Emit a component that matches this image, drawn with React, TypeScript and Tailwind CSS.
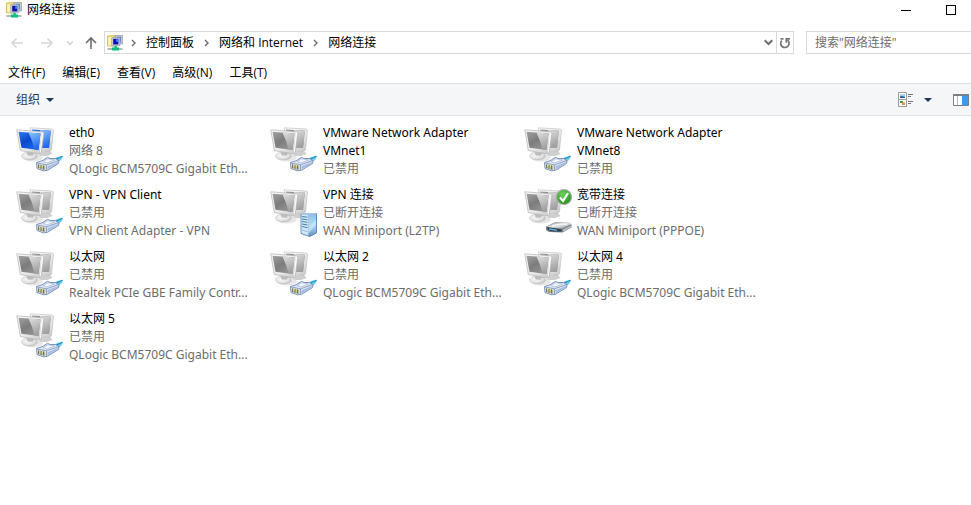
import React from "react";

type Badge = "cable" | "server" | "modem";

type Connection = {
  name: string;
  lines: string[];
  badge: Badge;
  active?: boolean;
  isDefault?: boolean;
};

const connections: Connection[] = [
  { name: "eth0", lines: ["网络 8", "QLogic BCM5709C Gigabit Eth..."], badge: "cable", active: true },
  { name: "VMware Network Adapter VMnet1", lines: ["已禁用"], badge: "cable" },
  { name: "VMware Network Adapter VMnet8", lines: ["已禁用"], badge: "cable" },
  { name: "VPN - VPN Client", lines: ["已禁用", "VPN Client Adapter - VPN"], badge: "cable" },
  { name: "VPN 连接", lines: ["已断开连接", "WAN Miniport (L2TP)"], badge: "server" },
  { name: "宽带连接", lines: ["已断开连接", "WAN Miniport (PPPOE)"], badge: "modem", isDefault: true },
  { name: "以太网", lines: ["已禁用", "Realtek PCIe GBE Family Contr..."], badge: "cable" },
  { name: "以太网 2", lines: ["已禁用", "QLogic BCM5709C Gigabit Eth..."], badge: "cable" },
  { name: "以太网 4", lines: ["已禁用", "QLogic BCM5709C Gigabit Eth..."], badge: "cable" },
  { name: "以太网 5", lines: ["已禁用", "QLogic BCM5709C Gigabit Eth..."], badge: "cable" },
];

const menus = ["文件(F)", "编辑(E)", "查看(V)", "高级(N)", "工具(T)"];
const crumbs = ["控制面板", "网络和 Internet", "网络连接"];

function Gradients() {
  return (
    <svg width="0" height="0" className="absolute" aria-hidden="true">
      <defs>
        <linearGradient id="blueScreen" x1="0" y1="0" x2="0.7" y2="1">
          <stop offset="0" stopColor="#2f7df0" />
          <stop offset="0.5" stopColor="#0b46cc" />
          <stop offset="1" stopColor="#1c6cf0" />
        </linearGradient>
        <linearGradient id="blueShine" x1="0" y1="0" x2="0.3" y2="1">
          <stop offset="0" stopColor="#8cc6ff" />
          <stop offset="1" stopColor="#1f68ee" />
        </linearGradient>
        <linearGradient id="greyScreen" x1="0" y1="0" x2="0.7" y2="1">
          <stop offset="0" stopColor="#a2a2a2" />
          <stop offset="0.5" stopColor="#7c7c7c" />
          <stop offset="1" stopColor="#969696" />
        </linearGradient>
        <linearGradient id="greyShine" x1="0" y1="0" x2="0.3" y2="1">
          <stop offset="0" stopColor="#dedede" />
          <stop offset="1" stopColor="#a0a0a0" />
        </linearGradient>
        <linearGradient id="bezel" x1="0" y1="0" x2="1" y2="1">
          <stop offset="0" stopColor="#fafafa" />
          <stop offset="0.6" stopColor="#e8e8e8" />
          <stop offset="1" stopColor="#c2c2c2" />
        </linearGradient>
        <radialGradient id="foot" cx="0.4" cy="0.4" r="0.7">
          <stop offset="0" stopColor="#fafafa" />
          <stop offset="0.6" stopColor="#e2e2e2" />
          <stop offset="1" stopColor="#b2b2b2" />
        </radialGradient>
        <linearGradient id="serverSide" x1="0" y1="0" x2="0" y2="1">
          <stop offset="0" stopColor="#8dbbe0" />
          <stop offset="0.5" stopColor="#b8dbf2" />
          <stop offset="1" stopColor="#5b8fc0" />
        </linearGradient>
        <radialGradient id="check" cx="0.4" cy="0.3" r="0.8">
          <stop offset="0" stopColor="#6fd05c" />
          <stop offset="1" stopColor="#1c8c14" />
        </radialGradient>
        <linearGradient id="modemTop" x1="0" y1="0" x2="1" y2="1">
          <stop offset="0" stopColor="#8e979c" />
          <stop offset="0.5" stopColor="#e4e8ea" />
          <stop offset="1" stopColor="#7e878c" />
        </linearGradient>
      </defs>
    </svg>
  );
}

function CableBadge() {
  return (
    <g>
      <path d="M37 36 L41 33 L47 31.800 L45.500 35.500 L42 38.500Z" fill="#6fcdea" />
      <path d="M39.500 35.500 L46.500 32.300" stroke="#1b8fc6" strokeWidth="1.200" />
      <path d="M20.500 38.500 L26 36.800 L31.500 33.300 L34 34.500 L39.500 34.500 L43 36.800 L42.500 39.500 L31.500 46.300 L27.500 46.800 L21 44.500Z" fill="#dbe5f4" stroke="#6f88b2" strokeWidth="0.900" strokeLinejoin="round" />
      <path d="M21 39 L30.500 40.800 L42 36.800 M30.500 40.800 L30.500 46" fill="none" stroke="#7d93b8" strokeWidth="0.800" />
      <path d="M27 37.500 L32 34.800 L38.500 36 L31 38.800Z" fill="#f4f8fd" stroke="#8fa3c6" strokeWidth="0.500" />
      <path d="M31.500 42.300 L42 38 L42 39.500 L31.500 45.300Z" fill="#a6bee2" />
      <path d="M22.200 40.200v3.800l7 2.300v-4.600z" fill="#b9b998" />
      <path d="M22.500 40.500v3.500M25 41v3.800M27.500 41.500v4" stroke="#6a6c52" strokeWidth="0.900" />
      <path d="M23.800 40.700v2.300M26.300 41.200v2.300" stroke="#f0e46a" strokeWidth="0.900" />
    </g>
  );
}

function ServerBadge() {
  return (
    <g>
      <path d="M31 28 L35 27 L46.500 27.500 L46.500 47 L40 50.500 L31 47.500Z" fill="#6c9fce" />
      <path d="M31 28 L38.500 29 L38.500 50 L31 47.500Z" fill="#d3e8f6" />
      <path d="M38.500 29 L46.500 27.500 L46.500 47 L39.500 50.500 L38.500 50Z" fill="url(#serverSide)" />
      <path d="M31 28 L35 27 L46.500 27.500 L38.500 29Z" fill="#a9cce8" />
      <path d="M32 30.500l5.500 .7M32 33l5.500 .8M32 35.500l5.500 .9M32 38l5.500 1M32 40.500l5.500 1.200" stroke="#427fae" strokeWidth="1" />
      <path d="M32 44 L37.500 45.700" stroke="#93bdd8" strokeWidth="1" />
      <path d="M38.500 42 L46.500 33 L46.500 37 L38.500 48Z" fill="#dceefa" opacity="0.6" />
      <path d="M31 28 L31 47.500 L39.500 50.500 L46.500 47 L46.500 27.500" fill="none" stroke="#4a7fb0" strokeWidth="0.800" />
    </g>
  );
}

function ModemBadge() {
  return (
    <g>
      <path d="M22 40.500 L31 36.300 L45 36.800 L47.500 38.500 L47.500 41.500 L38.500 46.500 L25 46 L22 44Z" fill="#7a8186" />
      <path d="M22.500 40.500 L31.500 36.300 L45 36.800 L47 38.500 L38 42.500 L27 41.500Z" fill="url(#modemTop)" />
      <path d="M28 40 Q33 37.500 43 38.300" fill="none" stroke="#fff" strokeWidth="1" />
      <path d="M23 41.200 Q30 42 37.500 43.500 L37.500 45.500 Q28 46 24 44Z" fill="#2b3d48" />
      <path d="M25 42.800 L33 44.300" stroke="#62bfe8" strokeWidth="1.300" />
      <path d="M39 43.500 L47 39.800 L47 41.300 L39 45.500Z" fill="#bcc2c5" />
    </g>
  );
}

function ConnectionIcon({ badge, active, isDefault }: Pick<Connection, "badge" | "active" | "isDefault">) {
  const screen = active ? "url(#blueScreen)" : "url(#greyScreen)";
  const shine = active ? "url(#blueShine)" : "url(#greyShine)";
  return (
    <svg width="48" height="52" viewBox="0 0 48 52" className="shrink-0" aria-hidden="true">
      <path d="M24 27 L34 27 L36.500 30 L31 32 L23 32Z" fill="#cfcfcf" />
      <ellipse cx="17" cy="33.500" rx="10" ry="4" fill="#dddddd" opacity="0.7" />
      <path d="M14 3.800 L36.500 5 L37.500 6.300 L35.500 26 L33 27.500 L20 25Z" fill="url(#bezel)" stroke="#bcbcbc" strokeWidth="0.600" />
      <path d="M16 5.500 L34.800 6.800 L33 24 L20 24Z" fill={screen} />
      <path d="M24 6 L34.800 6.800 L33 24 L26 24Z" fill={shine} />
      <ellipse cx="13.500" cy="32" rx="8" ry="4" fill="url(#foot)" stroke="#bebebe" strokeWidth="0.500" />
      <path d="M10.500 28 L18.500 28.700 L16.500 31.800 L11.500 31.500Z" fill="#bdbdbd" />
      <path d="M0.800 5.800 L26.500 7.800 L28 9.300 L25.300 28.300 L23 29.800 L4.300 26.500Z" fill="url(#bezel)" stroke="#b2b2b2" strokeWidth="0.700" />
      <path d="M2.500 7.800 L24.500 9.500 L22.500 26 L5.500 23.800Z" fill={screen} />
      <path d="M12.500 8.600 L24.500 9.500 L22.500 26 L18.500 25.500 Q16.500 17 12.500 8.600Z" fill={shine} />
      <path d="M26.500 8.500 L24.300 28.500" stroke="#fff" strokeWidth="0.900" />
      {badge === "cable" && <CableBadge />}
      {badge === "server" && <ServerBadge />}
      {badge === "modem" && <ModemBadge />}
      {isDefault && (
        <g>
          <circle cx="40" cy="11" r="7.500" fill="url(#check)" stroke="#a9aaa9" strokeWidth="1.200" />
          <path d="M36 11.500 L39 15 L44 7" fill="none" stroke="#fff" strokeWidth="2.200" />
        </g>
      )}
    </svg>
  );
}

function NetworkFolderIcon() {
  return (
    <svg width="16" height="16" viewBox="0 0 16 16" className="shrink-0" aria-hidden="true">
      <path d="M.5 1 L8 .500 L9 1 L9 11 L.5 11Z" fill="#f0d877" stroke="#cfae48" strokeWidth="0.700" />
      <path d="M1.200 2h3.300v8.500H1.200z" fill="#fdf3b4" />
      <path d="M8 .500 L15.500 .500 L15.500 9 L8 9Z" fill="#c3c9d3" stroke="#9299a6" strokeWidth="0.700" />
      <path d="M10 1.800h4v5.500h-4z" fill="#5d83dc" />
      <path d="M4.800 2.800h8v8h-8z" fill="#d4dbe8" stroke="#8d97aa" strokeWidth="0.700" />
      <path d="M6.200 3.800h5.200v5.700H6.200z" fill="#1010a8" />
      <path d="M9.200 4.200h2v2.600h-2z" fill="#4b8cf4" />
      <path d="M7.500 11h2.300v1.500H12V15.500H5v-3h2.500z" fill="#10bd80" />
      <path d="M.5 14H5M12 14h3.500" stroke="#8fa8a4" strokeWidth="1.500" />
    </svg>
  );
}

function Arrow({ d, color }: { d: string; color: string }) {
  return (
    <svg width="14" height="14" viewBox="0 0 14 14" fill="none" stroke={color} strokeWidth="1.600" aria-hidden="true">
      <path d={d} />
    </svg>
  );
}

function Separator() {
  return (
    <svg width="6" height="8" viewBox="0 0 6 8" fill="none" stroke="#6b6b6b" strokeWidth="1.400" className="shrink-0" aria-hidden="true">
      <path d="M1 1l3 3-3 3" />
    </svg>
  );
}

function Caret() {
  return (
    <svg width="8" height="4" viewBox="0 0 8 4" aria-hidden="true">
      <path d="M0 0h8L4 4z" fill="#1e395b" />
    </svg>
  );
}

export default function App() {
  return (
    <div className="min-h-screen bg-white text-xs text-black font-['Open_Sans','Noto_Sans_CJK_SC',sans-serif]">
      <Gradients />
      <header className="flex h-5 items-center pl-[6px]">
        <NetworkFolderIcon />
        <h1 className="ml-[5px] flex-1">网络连接</h1>
        <button type="button" aria-label="最小化" className="flex h-full w-[50px] items-center justify-center">
          <span className="h-px w-[10px] bg-black" />
        </button>
        <button type="button" aria-label="最大化" className="flex h-full w-10 items-center justify-center">
          <span className="h-[10px] w-[10px] border border-black" />
        </button>
      </header>

      <div className="flex items-center pt-[11px]">
        <nav aria-label="导航" className="flex w-[104px] shrink-0 items-center pl-[10px]">
          <button type="button" aria-label="后退">
            <Arrow d="M13 7H2M6.500 2.500L2 7l4.500 4.500" color="#d6d6d6" />
          </button>
          <button type="button" aria-label="前进" className="ml-4">
            <Arrow d="M1 7h11M7.500 2.500L12 7l-4.500 4.500" color="#d6d6d6" />
          </button>
          <button type="button" aria-label="最近" className="ml-[13px]">
            <svg width="6" height="4" viewBox="0 0 6 4" fill="none" stroke="#cfcfcf" strokeWidth="1.200" aria-hidden="true">
              <path d="M0 .5l3 3 3-3" />
            </svg>
          </button>
          <button type="button" aria-label="上移" className="ml-[11px]">
            <Arrow d="M7 13V2M2 7l5-5 5 5" color="#6e6e6e" />
          </button>
        </nav>
        <div className="flex h-[23px] flex-1 items-center border border-[#d9d9d9]">
          <div className="flex flex-1 items-center pl-[2px]">
            <NetworkFolderIcon />
            {crumbs.map((crumb, i) => (
              <div key={crumb} className={i === 0 ? "ml-2 flex items-center" : "ml-[10px] flex items-center"}>
                <Separator />
                <button type="button" className="ml-[9px] leading-5">{crumb}</button>
              </div>
            ))}
          </div>
          <button type="button" aria-label="以前的位置" className="mr-[3px]">
            <svg width="9" height="7" viewBox="0 0 9 7" fill="none" stroke="#707070" strokeWidth="2" aria-hidden="true">
              <path d="M.7 1.200l3.800 3.800 3.800-3.800" />
            </svg>
          </button>
          <button type="button" aria-label="刷新" className="flex h-full w-[17px] items-center justify-center border-l border-[#d9d9d9]">
            <svg width="12" height="12" viewBox="0 0 12 12" fill="none" stroke="#757575" strokeWidth="1.700" aria-hidden="true">
              <path d="M2.800 3.500A4.200 4.200 0 1 0 8.500 3" />
              <path d="M11 1.800H7.300v3.900M1.500 1.800h3" />
            </svg>
          </button>
        </div>
        <input
          type="search"
          aria-label="搜索"
          placeholder={'搜索"网络连接"'}
          className="ml-3 h-[23px] w-[165px] border border-r-0 border-[#d9d9d9] pl-2 outline-none placeholder:text-[#6d6d6d]"
        />
      </div>

      <nav aria-label="菜单" className="flex h-[29px] items-center gap-[17px] px-2 pt-[9px]">
        {menus.map((menu) => (
          <button key={menu} type="button" className="leading-5">{menu}</button>
        ))}
      </nav>

      <div className="flex h-[33px] items-center border-y border-[#e0e1e3] bg-[#f5f6f7] pr-[2px] pl-4">
        <button type="button" className="flex items-center gap-[6px] text-[#1e395b]">
          组织
          <Caret />
        </button>
        <div className="flex-1" />
        <button type="button" aria-label="更改视图" className="mr-[10px]">
          <svg width="16" height="16" viewBox="0 0 16 16" fill="none" aria-hidden="true">
            <path d="M.5 .5h8v7h-8zM.5 7.500h8v7h-8z" fill="#fff" stroke="#9a9a9a" />
            <path d="M2 2h5v4H2z" fill="#9fd0f5" />
            <path d="M2 4.500l2-.5 3 1V6H2z" fill="#1f5f96" />
            <path d="M2 9h3v2H2z" fill="#3b9a4c" />
            <path d="M4 10.500h3V13H4z" fill="#e7903c" />
            <path d="M10 2.500h5M10 4.500h3M10 9.500h5M10 11.500h3" stroke="#777" />
          </svg>
        </button>
        <button type="button" aria-label="更多选项" className="mr-[21px]">
          <Caret />
        </button>
        <button type="button" aria-label="预览窗格">
          <svg width="16" height="12" viewBox="0 0 16 12" aria-hidden="true">
            <path d="M.5 .5h15v11H.5z" fill="#fff" stroke="#7d7d7d" />
            <path d="M0 0h16v2H0z" fill="#7d7d7d" />
            <path d="M4.500 2v9" stroke="#b4b4b4" />
            <path d="M9 1.500h6v10H9z" fill="#3d9be9" />
          </svg>
        </button>
      </div>

      <main className="pt-2 pl-4">
        <ul className="grid grid-cols-[repeat(auto-fill,254px)] font-['Noto_Sans','Noto_Sans_CJK_SC',sans-serif]">
          {connections.map((c) => (
            <li key={c.name} className="h-[62px]">
              <button type="button" className="flex items-start gap-[5px] text-left leading-[18px]">
                <ConnectionIcon badge={c.badge} active={c.active} isDefault={c.isDefault} />
                <span className="flex w-[190px] flex-col">
                  <span>{c.name}</span>
                  {c.lines.map((line) => (
                    <span key={line} className="whitespace-nowrap text-[#6d6d6d]">{line}</span>
                  ))}
                </span>
              </button>
            </li>
          ))}
        </ul>
      </main>
    </div>
  );
}
